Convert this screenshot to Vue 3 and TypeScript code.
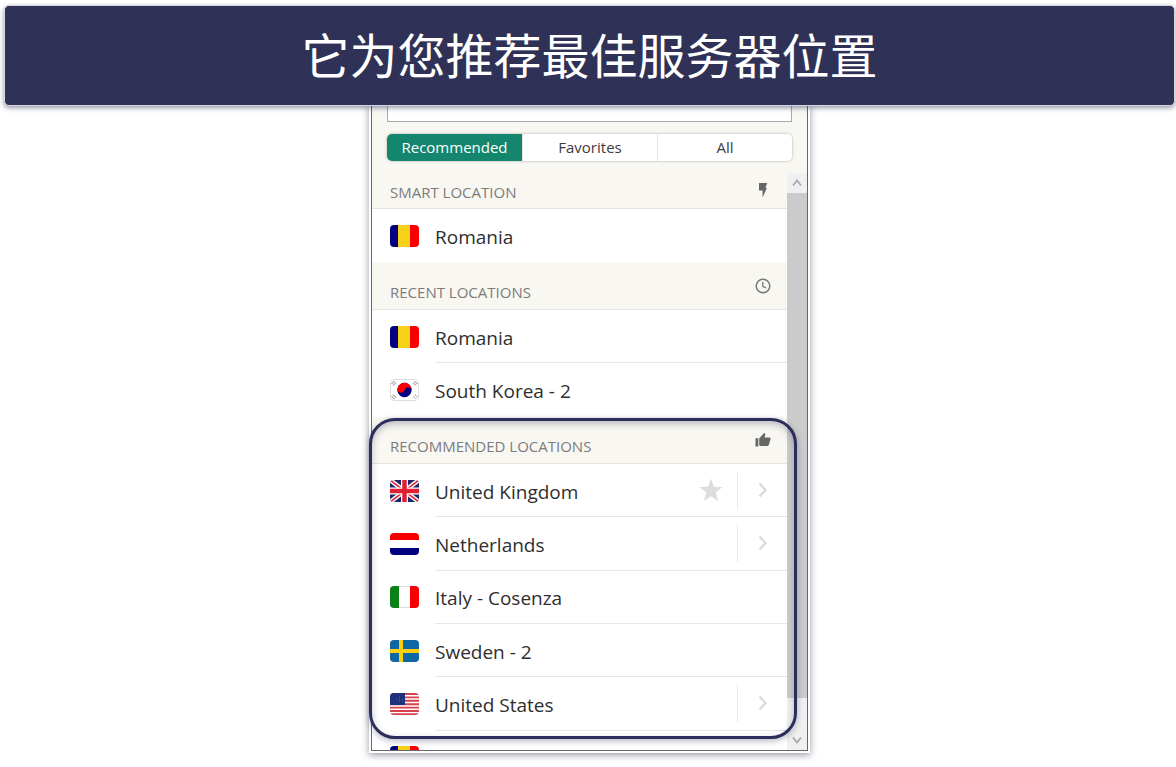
<script setup lang="ts">
import { ref } from 'vue'

type Country = 'ro' | 'kr' | 'gb' | 'nl' | 'it' | 'se' | 'us'
interface Place {
  name?: string
  flag: Country
  star?: boolean
  more?: boolean
}
interface Section {
  id: string
  title: string
  icon: 'bolt' | 'clock' | 'thumb'
  places: Place[]
}

const tabs = ['Recommended', 'Favorites', 'All']
const active = ref('Recommended')
const query = ref('')

const sections: Section[] = [
  { id: 'smart', title: 'SMART LOCATION', icon: 'bolt', places: [{ name: 'Romania', flag: 'ro' }] },
  {
    id: 'recent',
    title: 'RECENT LOCATIONS',
    icon: 'clock',
    places: [
      { name: 'Romania', flag: 'ro' },
      { name: 'South Korea - 2', flag: 'kr' },
    ],
  },
  {
    id: 'recommended',
    title: 'RECOMMENDED LOCATIONS',
    icon: 'thumb',
    places: [
      { name: 'United Kingdom', flag: 'gb', star: true, more: true },
      { name: 'Netherlands', flag: 'nl', more: true },
      { name: 'Italy - Cosenza', flag: 'it' },
      { name: 'Sweden - 2', flag: 'se' },
      { name: 'United States', flag: 'us', more: true },
      { flag: 'ro' },
    ],
  },
]
</script>

<template>
  <div class="page">
    <header class="banner"><h1>它为您推荐最佳服务器位置</h1></header>

    <main class="panel">
      <div class="tools">
        <input v-model="query" class="search" type="search" aria-label="Search locations" />
        <nav class="tabs">
          <button
            v-for="tab in tabs"
            :key="tab"
            type="button"
            class="tab"
            :class="{ on: tab === active }"
            :aria-pressed="tab === active"
            @click="active = tab"
          >{{ tab }}</button>
        </nav>
      </div>

      <div class="body">
        <div class="list">
          <section v-for="s in sections" :key="s.id" :class="['section', s.id]">
            <div class="head">
              <h2>{{ s.title }}</h2>
              <svg v-if="s.icon === 'bolt'" class="icon" viewBox="0 0 16 16" aria-hidden="true">
                <path d="M4 1h8.200l-1.800 4.800H12L7.600 15.500V8.600H4z" fill="#666" />
              </svg>
              <svg v-else-if="s.icon === 'clock'" class="icon" viewBox="0 0 16 16" fill="none" stroke="#777" aria-hidden="true">
                <circle cx="8" cy="8" r="6.800" stroke-width="1.500" />
                <path d="M7.800 4v4.400l3.200 1.400" stroke-width="1.300" />
              </svg>
              <svg v-else class="icon" viewBox="0 0 16 16" fill="#666" aria-hidden="true">
                <path d="M.5 6.200h2.800v8.300H.5zM4.200 6.200 9.200 1c1 .4 1.200 1 1 1.800L9.500 5.600h4.700c1 0 1.500.7 1.300 1.600l-1.700 5.500c-.3.900-.7 1.300-1.600 1.300H6.300c-1.200 0-2.100-.6-2.100-1.600z" />
              </svg>
            </div>
            <ul>
              <li v-for="(p, i) in s.places" :key="i" class="row">
                <svg class="flag" viewBox="0 0 29 22" aria-hidden="true">
                  <g v-if="p.flag === 'ro'">
                    <path d="M0 0h9v22H0z" fill="#000080" />
                    <path d="M8 0h13v22H8z" fill="#f7d117" />
                    <path d="M20 0h9v22h-9z" fill="#f80000" />
                  </g>
                  <g v-else-if="p.flag === 'kr'">
                    <rect x=".5" y=".5" width="28" height="21" rx="3" fill="#fff" stroke="#ddd" />
                    <g transform="rotate(15 14.500 11)">
                      <circle cx="14.500" cy="11" r="7.200" fill="#000080" />
                      <path d="M7.300 11a7.200 7.200 0 0 1 14.400 0 3.600 3.600 0 0 0-7.200 0 3.600 3.600 0 0 1-7.200 0z" fill="#f80000" />
                    </g>
                    <g stroke="#777" stroke-width="1" fill="none">
                      <path d="M1.500 5 4.500 2M3 6.500l3-3M24.500 2l3 3M23 3.500l3 3M1.500 17l3 3M3 15.500l3 3" />
                      <path d="M27.500 17l-3 3M26 15.500l-3 3" stroke-dasharray="1.500 1" />
                    </g>
                  </g>
                  <g v-else-if="p.flag === 'gb'">
                    <path d="M0 0h29v22H0z" fill="#1c2769" />
                    <path d="M0 0 29 22M29 0 0 22" stroke="#fff" stroke-width="4.500" />
                    <path d="M0 0 29 22M29 0 0 22" stroke="#e02030" stroke-width="1.600" />
                    <path d="M14.500 0v22M0 11h29" stroke="#fff" stroke-width="7" />
                    <path d="M14.500 0v22M0 11h29" stroke="#e02030" stroke-width="4.500" />
                  </g>
                  <g v-else-if="p.flag === 'nl'">
                    <path d="M0 0h29v22H0z" fill="#fff" />
                    <path d="M0 0h29v7H0z" fill="#f80000" />
                    <path d="M0 15h29v7H0z" fill="#000080" />
                  </g>
                  <g v-else-if="p.flag === 'it'">
                    <path d="M.5.500h28v21H.5z" fill="#fff" stroke="#ddd" />
                    <path d="M0 0h9v22H0z" fill="#0b8017" />
                    <path d="M20 0h9v22h-9z" fill="#f80000" />
                  </g>
                  <g v-else-if="p.flag === 'se'">
                    <path d="M0 0h29v22H0z" fill="#0f67a3" />
                    <path d="M11 0v22M0 11h29" stroke="#fbcf0c" stroke-width="4" />
                  </g>
                  <g v-else>
                    <path d="M0 0h29v22H0z" fill="#fff" />
                    <path d="M0 1h29M0 4.400h29M0 7.800h29M0 11.200h29M0 14.600h29M0 18h29M0 21.300h29" stroke="#d8404c" stroke-width="1.900" />
                    <path d="M0 0h15v12H0z" fill="#1f2f7c" />
                    <path d="M6 6h8M9 4h3M9 8h4" stroke="#4a6a9c" stroke-dasharray="1 2" />
                  </g>
                </svg>
                <div class="line">
                  <span v-if="p.name" class="name">{{ p.name }}</span>
                  <button v-if="p.star" type="button" class="star" aria-label="Add to favorites">
                    <svg viewBox="0 0 24 24"><path d="m12 .5 2.900 8.200 8.600.3-6.700 5.400 2.300 8.600-7.100-4.800L4.900 23l2.300-8.600L.5 9l8.600-.3z" fill="#ddd" /></svg>
                  </button>
                  <button v-if="p.more" type="button" class="more" :aria-label="`Show ${p.name} locations`">
                    <svg viewBox="0 0 16 16"><path d="m4.500 1.500 6 6.500-6 6.500" fill="none" stroke="#d9d9d9" stroke-width="2.200" /></svg>
                  </button>
                </div>
              </li>
            </ul>
          </section>
        </div>

        <div class="bar">
          <button type="button" class="step" aria-label="Scroll up">
            <svg viewBox="0 0 10 10"><path d="m1 7.500 4-5 4 5" fill="none" stroke="#aaa" stroke-width="1.800" /></svg>
          </button>
          <div class="track"><div class="thumb"></div></div>
          <button type="button" class="step" aria-label="Scroll down">
            <svg viewBox="0 0 10 10"><path d="m1 2.500 4 5 4-5" fill="none" stroke="#aaa" stroke-width="1.800" /></svg>
          </button>
        </div>
      </div>
      <div class="highlight"></div>
    </main>
  </div>
</template>

<style>
body {
  margin: 0;
  background: #fff;
}
</style>

<style scoped>
* {
  box-sizing: border-box;
}
.page {
  display: flex;
  flex-direction: column;
  align-items: center;
  height: 100vh;
  padding: 5px 1px 16px 4px;
  overflow: hidden;
  font-family: "Open Sans", "Noto Sans", sans-serif;
}
.banner {
  position: relative;
  z-index: 2;
  flex: none;
  width: 100%;
  height: 101px;
  padding-bottom: 6px;
  border: 1px solid #d3d6e2;
  border-radius: 5px;
  background: #2f3156;
  box-shadow: 0 2px 5px rgba(47, 49, 86, 0.5);
  display: flex;
  align-items: center;
  justify-content: center;
}
h1 {
  margin: 0;
  color: #fff;
  font: 400 48px/64px "Noto Sans CJK SC", sans-serif;
}
.panel {
  position: relative;
  display: flex;
  flex: 1;
  flex-direction: column;
  width: 437px;
  min-height: 0;
  border: 1px solid #666;
  border-top: 0;
  background: #f8f7f2;
  box-shadow: 0 0 0 2px #fff, 0 2px 7px 2px rgba(47, 49, 86, 0.5);
}
.tools {
  flex: none;
  padding: 0 15px 12px;
}
.search {
  display: block;
  width: 100%;
  height: 16px;
  padding: 0 12px;
  border: 1px solid #aaa;
  border-top: 0;
  border-radius: 0;
  outline: 0;
  background: #fff;
  appearance: none;
}
.tabs {
  display: grid;
  grid-template-columns: repeat(3, 1fr);
  height: 27px;
  margin-top: 12px;
  border-radius: 5px;
  overflow: hidden;
  background: #fff;
  box-shadow: 0 0 3px rgba(0, 0, 0, 0.3);
}
.tab {
  padding: 0 0 2px;
  border: 0;
  border-left: 1px solid #e2e2e2;
  background: #fff;
  color: #3c3c3c;
  font: 400 15px/24px "Open Sans", sans-serif;
}
.tab.on {
  border-left: 0;
  background: #13866d;
  color: #fff;
}
.body {
  display: flex;
  flex: 1;
  min-height: 0;
}
.list {
  flex: 1;
  min-width: 0;
  overflow: hidden;
}
.head {
  display: flex;
  align-items: flex-start;
  justify-content: space-between;
  height: 48px;
  padding: 16px 16px 0 18px;
  border-bottom: 1px solid #e6e4df;
}
.smart .head {
  height: 36px;
  padding-top: 9px;
}
.recommended .head {
  height: 47px;
}
h2 {
  margin: 4px 0 0;
  color: #7c7c7c;
  font-size: 15px;
  font-weight: 400;
  line-height: 20px;
}
.smart h2 {
  margin-top: 0;
}
.recommended .head {
  padding-top: 15px;
}
.icon {
  width: 16px;
  height: 16px;
}
ul {
  margin: 0;
  padding: 0;
  list-style: none;
  background: #fff;
}
.recommended ul {
  display: grid;
  grid-template-rows: repeat(6, 1fr);
  height: 320px;
}
.row {
  display: flex;
  align-items: center;
  height: 53px;
  padding-left: 18px;
}
.recommended .row {
  height: auto;
}
.recent .row:last-child {
  height: 54px;
}
.flag {
  flex: none;
  width: 29px;
  height: 22px;
  border-radius: 4px;
}
.line {
  display: flex;
  flex: 1;
  align-items: center;
  align-self: stretch;
  margin-left: 16px;
  border-bottom: 1px solid #e6e6e6;
}
.smart .line,
.recent .row:last-child .line {
  border-bottom-color: #fff;
}
.name {
  flex: 1;
  padding-top: 3px;
  color: #2e2e2e;
  font-size: 19px;
  line-height: 28px;
}
.star,
.more {
  display: flex;
  align-items: center;
  justify-content: center;
  padding: 0;
  border: 0;
  background: none;
}
.star {
  margin-right: 14px;
}
.star svg {
  width: 24px;
  height: 24px;
}
.more {
  width: 50px;
  height: 37px;
  border-left: 1px solid #e8e8e8;
}
.more svg {
  width: 16px;
  height: 16px;
}
.bar {
  display: flex;
  flex: none;
  flex-direction: column;
  width: 20px;
  background: #f0f0f0;
}
.step {
  display: flex;
  align-items: center;
  justify-content: center;
  height: 20px;
  padding: 0;
  border: 0;
  background: none;
}
.step svg {
  width: 10px;
  height: 10px;
}
.track {
  flex: 1;
}
.thumb {
  height: 94%;
  background: #cbcbcb;
}
.highlight {
  position: absolute;
  top: 312px;
  right: 10px;
  bottom: 11px;
  left: -3px;
  border: 3px solid #2b2d5a;
  border-radius: 26px;
  box-shadow: 0 2px 6px rgba(47, 49, 86, 0.35), inset 0 3px 7px rgba(47, 49, 86, 0.3);
  pointer-events: none;
}
</style>
